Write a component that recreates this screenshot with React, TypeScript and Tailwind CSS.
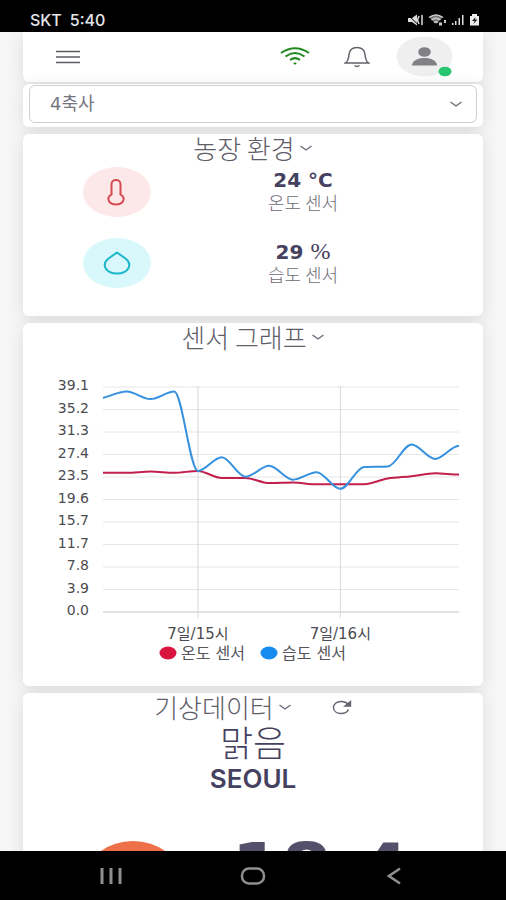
import { useState } from 'react';
import type { ReactNode } from 'react';

const labels = ['39.1', '35.2', '31.3', '27.4', '23.5', '19.6', '15.7', '11.7', '7.8', '3.9', '0.0'];
const temperature = [24.2, 24.2, 24.4, 24.2, 24.5, 23.3, 23.3, 22.4, 22.5, 22.2, 22.2, 22.2, 23.2, 23.6, 24.1, 23.9];
const humidity = [37.2, 38.3, 37.0, 38.3, 24.5, 26.9, 23.5, 25.4, 23.0, 24.3, 21.4, 25.2, 25.3, 29.1, 26.6, 28.9];
const hours = [
  { index: 4, text: '7일/15시' },
  { index: 10, text: '7일/16시' },
];

const plot = { left: 80, right: 436, top: 16, bottom: 241, max: 39.1 };

const toX = (i: number) => plot.left + (i * (plot.right - plot.left)) / (humidity.length - 1);
const toY = (v: number) => plot.bottom - (v / plot.max) * (plot.bottom - plot.top);

// monotone cubic curve, flat at each peak and valley
function linePath(values: number[]) {
  const step = toX(1) - toX(0);
  const ys = values.map(toY);
  const slopes = ys.map((y, i) => {
    if (i === 0 || i === ys.length - 1) return 0;
    const before = y - ys[i - 1];
    const after = ys[i + 1] - y;
    if (before * after <= 0) return 0;
    return (2 * before * after) / (before + after) / step;
  });
  slopes[0] = (ys[1] - ys[0]) / step;

  let d = `M${toX(0)} ${ys[0]}`;
  for (let i = 1; i < ys.length; i++) {
    const c1 = `${toX(i - 1) + step / 3} ${ys[i - 1] + (slopes[i - 1] * step) / 3}`;
    const c2 = `${toX(i) - step / 3} ${ys[i] - (slopes[i] * step) / 3}`;
    d += ` C${c1} ${c2} ${toX(i)} ${ys[i]}`;
  }
  return d;
}

function Chevron() {
  return (
    <svg width="14" height="8" viewBox="0 0 14 8" fill="none" stroke="#6e6b7b" strokeWidth="1.4" aria-hidden="true">
      <path d="M1.500 2 7 6l5.500-4" />
    </svg>
  );
}

function Card({ children, className = '' }: { children: ReactNode; className?: string }) {
  return (
    <section className={`rounded-md bg-white shadow-[0_3px_16px_rgba(34,41,47,0.12)] ${className}`}>{children}</section>
  );
}

function TitleButton({ children, onClick }: { children: ReactNode; onClick: () => void }) {
  return (
    <button type="button" onClick={onClick} className="flex items-center gap-1 text-[26px] leading-7 font-light">
      {children}
      <Chevron />
    </button>
  );
}

function StatusBar() {
  return (
    <div className="flex h-8 shrink-0 items-end justify-between bg-black pr-[26px] pb-1 pl-[30px] font-['Inter'] text-base leading-4 font-medium text-gray-200">
      <div className="flex gap-2">
        <span>SKT</span>
        <span>5:40</span>
      </div>
      <div className="flex items-center gap-1 pb-0.5">
        <svg width="17" height="12" viewBox="0 0 17 12" aria-hidden="true">
          <path d="M1 4h4l5-3.500v11L5 8H1z" fill="#ddd" />
          <path d="M1 1l10 9.500" stroke="#000" strokeWidth="1" />
          <path d="M12 2l-1.500 4 1.500 4M15 1v10" fill="none" stroke="#ddd" strokeWidth="1.500" />
        </svg>
        <svg width="19" height="12" viewBox="0 0 19 12" fill="none" aria-hidden="true">
          <path d="M1 3Q8-1 15 3L8 10z" fill="#777" />
          <path d="M1 3.500Q8 -1.500 15 3.500M3.500 6Q8 2.500 12.500 6M6 8.500Q8 7 10 8.500" stroke="#ccc" strokeWidth="1.500" />
          <path d="M11 8.500h3v3h-3zM16 6h2v3h-2z" fill="#ccc" />
        </svg>
        <svg width="14" height="12" viewBox="0 0 14 12" fill="#ddd" aria-hidden="true">
          <path d="M1 9h1.500v2H1zM4 7h1.500v4H4zM7.500 4H9v7H7.500zM11 1h1.500v10H11z" />
        </svg>
        <svg width="11" height="12" viewBox="0 0 11 12" aria-hidden="true">
          <path d="M3 0h5v2h2v9.500H1V2h2z" fill="#eee" />
          <path d="M6.500 3 3 7h2.500L4.500 10 8.500 5.500H6z" fill="#222" />
        </svg>
      </div>
    </div>
  );
}

function Header() {
  return (
    <header className="flex h-[50px] items-center justify-between rounded-b-md bg-white pr-[30px] pl-8 shadow-[0_3px_16px_rgba(34,41,47,0.12)]">
      <button type="button" aria-label="menu">
        <svg width="26" height="16" viewBox="0 0 26 16" stroke="#5c5c62" strokeWidth="1.600">
          <path d="M1 2.500h24M1 8h24M1 13.500h24" />
        </svg>
      </button>
      <div className="flex items-center gap-[30px]">
        <svg width="30" height="20" viewBox="0 0 30 20" fill="none" stroke="#208a20" strokeWidth="2" aria-hidden="true">
          <path d="M1 6Q15-3.500 29 6M5.500 9.500Q15 2.500 24.500 9.500M10 13q5-3.800 10 0" />
          <ellipse cx="15" cy="16.500" rx="1.600" ry="1.100" fill="#208a20" stroke="none" />
        </svg>
        <button type="button" aria-label="notifications" className="ml-1">
          <svg width="26" height="22" viewBox="0 0 26 22" fill="none" stroke="#62626a" strokeWidth="1.500">
            <path d="M1.500 17C4 15.500 4.500 13.500 5 8.500 5.500 4 8.500 1.500 13 1.500s7.500 2.500 8 7c.5 5 1 7 3.500 8.500z" />
            <path d="M10.500 19.500q2.500 1.800 5 0" />
          </svg>
        </button>
        <button type="button" aria-label="profile" className="-my-1 -ml-1">
          <svg width="57" height="42" viewBox="0 0 57 42">
            <ellipse cx="28.500" cy="20.500" rx="28" ry="20" fill="#efefef" />
            <ellipse cx="28.500" cy="16" rx="6.300" ry="4.800" fill="#818185" />
            <path d="M16 29.500c0-5 6-7.500 12.500-7.500S41 24.500 41 29.500z" fill="#818185" />
            <ellipse cx="49" cy="35.500" rx="6.500" ry="4.800" fill="#28c76f" />
          </svg>
        </button>
      </div>
    </header>
  );
}

function SensorRow({ icon, value, name }: { icon: ReactNode; value: ReactNode; name: string }) {
  return (
    <div className="grid h-[71px] grid-cols-[10fr_8fr_5fr]">
      <div className="pt-[5px] pl-[60px]">{icon}</div>
      <div className="flex flex-col items-center pt-1.5">
        <p className="font-['DejaVu_Sans'] text-xl leading-6 font-bold whitespace-pre text-[#45425f]">{value}</p>
        <p className="text-lg leading-5 font-light text-[#6e6c76]">{name}</p>
      </div>
    </div>
  );
}

function SensorChart() {
  return (
    <svg viewBox="0 0 460 304" className="block w-full font-['DejaVu_Sans','Noto_Sans_CJK_KR',sans-serif]" role="img">
      <g stroke="#e6e6e8" strokeWidth="1">
        {labels.map((label, i) => {
          const y = plot.top + (i * (plot.bottom - plot.top)) / 10;
          return <line key={label} x1={plot.left} x2={plot.right} y1={y} y2={y} stroke={i === 10 ? '#c4c4c6' : undefined} />;
        })}
        {hours.map((hour) => (
          <line key={hour.text} x1={toX(hour.index)} x2={toX(hour.index)} y1={plot.top - 1} y2={plot.bottom + 6} stroke="#d8d8da" />
        ))}
      </g>
      <g fill="#4b4b50" fontSize="14" textAnchor="end">
        {labels.map((label, i) => (
          <text key={label} x="66" y={19 + (i * (plot.bottom - plot.top)) / 10}>{label}</text>
        ))}
      </g>
      <g fill="#4b4b50" fontSize="15" textAnchor="middle">
        {hours.map((hour) => (
          <text key={hour.text} x={toX(hour.index)} y="268">{hour.text}</text>
        ))}
      </g>
      <path d={linePath(temperature)} fill="none" stroke="#c21f4c" strokeWidth="2" />
      <path d={linePath(humidity)} fill="none" stroke="#3691de" strokeWidth="2" />
      <g fill="#55555a" fontSize="16">
        <ellipse cx="145" cy="282" rx="8.500" ry="6.500" fill="#d9143f" />
        <text x="158" y="288">온도 센서</text>
        <ellipse cx="246" cy="282" rx="8.500" ry="6.500" fill="#188bf0" />
        <text x="259" y="288">습도 센서</text>
      </g>
    </svg>
  );
}

function NavBar() {
  return (
    <nav className="grid h-[49px] shrink-0 grid-cols-[1fr_62px_1fr] items-center bg-black">
      <button type="button" aria-label="recent apps" className="justify-self-center">
        <svg width="24" height="18" viewBox="0 0 24 18" stroke="#8f8f8f" strokeWidth="3">
          <path d="M3 1v16M12 1v16M21 1v16" />
        </svg>
      </button>
      <button type="button" aria-label="home" className="justify-self-center">
        <svg width="26" height="18" viewBox="0 0 26 18" fill="none" stroke="#8f8f8f" strokeWidth="2.500">
          <rect x="2" y="1.500" width="22" height="15" rx="7" />
        </svg>
      </button>
      <button type="button" aria-label="back" className="justify-self-center">
        <svg width="16" height="18" viewBox="0 0 16 18" fill="none" stroke="#8f8f8f" strokeWidth="2.500">
          <path d="M13 1.500 2 9l11 7.500" />
        </svg>
      </button>
    </nav>
  );
}

export default function App() {
  const [house, setHouse] = useState('4');
  const [open, setOpen] = useState({ env: true, graph: true, weather: true });

  return (
    <div className="flex h-screen flex-col overflow-hidden bg-[#f6f6f6] font-['Noto_Sans_CJK_KR',sans-serif] text-[#5f5d68]">
      <StatusBar />
      <main className="min-h-0 flex-1 overflow-hidden px-[23px]">
        <Header />
        <div className="flex flex-col gap-[7px] pt-0.5">
          <Card className="px-1.5 pt-px pb-1">
            <div className="relative">
              <select
                aria-label="축사"
                value={house}
                onChange={(e) => setHouse(e.target.value)}
                className="h-[38px] w-full appearance-none rounded-md border border-[#d0d0d4] bg-white px-5 font-['DejaVu_Sans','Noto_Sans_CJK_KR',sans-serif] text-lg text-[#77757f]"
              >
                <option value="4">4축사</option>
              </select>
              <span className="pointer-events-none absolute inset-y-0 right-3.5 flex items-center">
                <Chevron />
              </span>
            </div>
          </Card>

          <Card className="flex h-[182px] flex-col">
            <div className="flex justify-center">
              <TitleButton onClick={() => setOpen({ ...open, env: !open.env })}>농장 환경</TitleButton>
            </div>
            {open.env && (
              <div>
                <SensorRow
                  name="온도 센서"
                  value="24 °C"
                  icon={
                    <svg width="68" height="50" viewBox="0 0 68 50" aria-hidden="true">
                      <ellipse cx="34" cy="25" rx="34" ry="25" fill="#fce8e8" />
                      <path
                        d="M28.500 27.500V17c0-5.500 9-5.500 9 0v10.500c6.500 4 2 10-4.500 10s-11-6-4.500-10z"
                        fill="none"
                        stroke="#d54a50"
                        strokeWidth="2"
                      />
                    </svg>
                  }
                />
                <SensorRow
                  name="습도 센서"
                  value={
                    <>
                      29 <span className="font-['Liberation_Serif'] text-2xl leading-6 font-normal">%</span>
                    </>
                  }
                  icon={
                    <svg width="68" height="50" viewBox="0 0 68 50" aria-hidden="true">
                      <ellipse cx="34" cy="25" rx="34" ry="25" fill="#d9f8fb" />
                      <path
                        d="M34 14.500 25.500 20.500c-7.500 6-3 15 8.500 15s16-9 8.500-15z"
                        fill="none"
                        stroke="#1cb6c8"
                        strokeWidth="2"
                        strokeLinejoin="round"
                      />
                    </svg>
                  }
                />
              </div>
            )}
          </Card>

          <Card className="pb-[11px]">
            <div className="flex justify-center">
              <TitleButton onClick={() => setOpen({ ...open, graph: !open.graph })}>센서 그래프</TitleButton>
            </div>
            {open.graph && (
              <div className="pt-5">
                <SensorChart />
              </div>
            )}
          </Card>

          <Card>
            <div className="flex items-center justify-center gap-10">
              <TitleButton onClick={() => setOpen({ ...open, weather: !open.weather })}>기상데이터</TitleButton>
              <button type="button" aria-label="refresh">
                <svg width="20" height="15" viewBox="0 0 20 15" fill="none" stroke="#66646f" strokeWidth="1.400">
                  <path d="M17 5.500C15.500 3 12.500 1.500 9 1.500 4.500 1.500 1.500 4 1.500 7.500s3 6 7.500 6c3.500 0 6.500-1.500 7.500-4" />
                  <path d="M18.500 1.500v4.500h-5.500z" fill="#66646f" />
                </svg>
              </button>
            </div>
            {open.weather && (
              <div>
                <p className="text-center text-4xl leading-10 font-light text-[#45425f]">맑음</p>
                <p className="pt-0.5 text-center font-['Inter'] text-[26px] leading-8 font-semibold text-[#45425f]">SEOUL</p>
                <div className="grid grid-cols-[3fr_5fr] pt-10">
                  <svg width="92" height="70" viewBox="0 0 92 70" className="mt-1.5 ml-16" aria-hidden="true">
                    <ellipse cx="46" cy="35" rx="46" ry="35" fill="#ee7048" />
                  </svg>
                  <p className="pl-9 font-['DejaVu_Sans'] text-7xl leading-[68px] font-bold text-[#54506c]">18.4</p>
                </div>
              </div>
            )}
          </Card>
        </div>
      </main>
      <NavBar />
    </div>
  );
}
